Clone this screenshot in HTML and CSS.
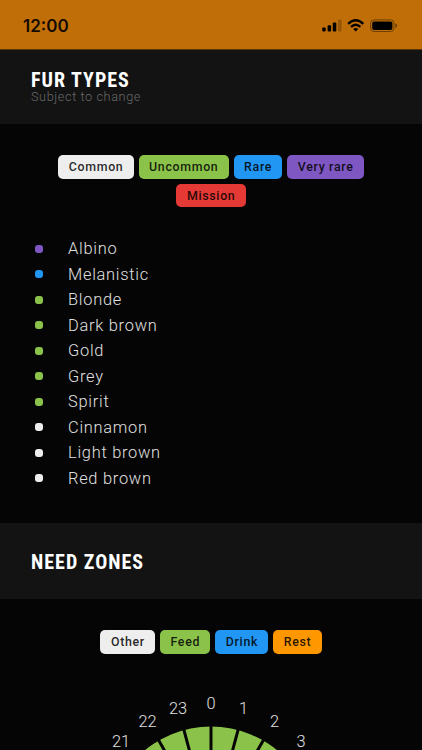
FILE: index.html
```html
<!DOCTYPE html>
<html lang="en">
<head>
    <meta charset="UTF-8">
    <meta name="viewport" content="width=device-width, initial-scale=1.0">
    <title>Fur types</title>
    <link rel="stylesheet" href="styles.css">
</head>
<body>
    <div class="status-bar">
        <span class="time">12:00</span>
        <svg class="status-icons" width="76" height="14" viewBox="0 0 76 14">
            <rect x="0.2" y="8.5" width="3.5" height="4" rx="1"/>
            <rect x="5.6" y="6.2" width="3.5" height="6.3" rx="1"/>
            <rect x="10.8" y="3.4" width="3.5" height="9.1" rx="1"/>
            <rect x="16" y="0.4" width="3.5" height="12.1" rx="1" opacity="0.22"/>
            <g fill="none" stroke="#000" stroke-width="2.3">
                <path d="M26.1 4.8 Q33.7 -2.2 41.3 4.8"/>
                <path d="M29 7.9 Q33.7 3.6 38.4 7.9"/>
            </g>
            <path d="M31.2 9.9 Q33.7 7.9 36.2 9.9 L33.7 12.5 Z"/>
            <rect x="48.6" y="0.9" width="23.4" height="11.6" rx="3.4" fill="none" stroke="#000" stroke-width="1" opacity="0.42"/>
            <rect x="50.2" y="2.5" width="20.2" height="8.4" rx="2"/>
            <path d="M73.3 4.6 Q75 5.2 75 6.7 Q75 8.2 73.3 8.8 Z" opacity="0.5"/>
        </svg>
    </div>

    <div class="section-header first">
        <h2>FUR TYPES</h2>
        <p>Subject to change</p>
    </div>
    <div class="content fur">
        <div class="tags">
            <span class="tag common">Common</span>
            <span class="tag uncommon">Uncommon</span>
            <span class="tag rare">Rare</span>
            <span class="tag very-rare">Very rare</span>
            <span class="tag mission">Mission</span>
        </div>
        <ul class="fur-list">
            <li><i class="dot very-rare"></i>Albino</li>
            <li><i class="dot rare"></i>Melanistic</li>
            <li><i class="dot uncommon"></i>Blonde</li>
            <li><i class="dot uncommon"></i>Dark brown</li>
            <li><i class="dot uncommon"></i>Gold</li>
            <li><i class="dot uncommon"></i>Grey</li>
            <li><i class="dot uncommon"></i>Spirit</li>
            <li><i class="dot common"></i>Cinnamon</li>
            <li><i class="dot common"></i>Light brown</li>
            <li><i class="dot common"></i>Red brown</li>
        </ul>
    </div>

    <div class="section-header second">
        <h2>NEED ZONES</h2>
    </div>
    <div class="content zones">
        <div class="tags">
            <span class="tag common">Other</span>
            <span class="tag uncommon">Feed</span>
            <span class="tag rare">Drink</span>
            <span class="tag rest">Rest</span>
        </div>
        <svg class="clock" width="422" height="97" viewBox="0 0 422 97">
            <circle cx="211" cy="176.5" r="104" fill="#8bc34a"/>
            <g stroke="#050505" stroke-width="3">
                <path d="M211 177V70"/>
                <path d="M211 177L238.7 73.6"/>
                <path d="M211 177L264.5 84.3"/>
                <path d="M211 177L286.7 101.3"/>
                <path d="M211 177L183.3 73.6"/>
                <path d="M211 177L157.5 84.3"/>
                <path d="M211 177L135.3 101.3"/>
            </g>
            <g class="hours">
                <text x="121" y="93">21</text>
                <text x="147.5" y="72.5">22</text>
                <text x="178" y="60">23</text>
                <text x="211" y="55.4">0</text>
                <text x="243.5" y="60">1</text>
                <text x="274.5" y="72.5">2</text>
                <text x="301" y="93">3</text>
            </g>
        </svg>
    </div>
</body>
</html>
```

FILE: styles.css
```css
* {
    margin: 0;
    padding: 0;
    box-sizing: border-box;
}
body {
    height: 750px;
    overflow: hidden;
    background: #050505;
    color: #e0e0e0;
    font-family: Roboto, sans-serif;
}
.status-bar {
    height: 50px;
    padding: 3px 24px 0 23px;
    display: flex;
    align-items: center;
    justify-content: space-between;
    background: #c06f08;
    border-bottom: 1px solid #57340a;
}
.time {
    font-family: Inter, sans-serif;
    font-size: 17px;
    font-weight: 600;
    color: #140a02;
}
.section-header {
    height: 76px;
    padding: 0 31px;
    display: flex;
    flex-direction: column;
    justify-content: center;
    background: #131313;
}
.section-header.first {
    height: 74px;
}
.section-header.second {
    padding-top: 1px;
}
.section-header h2 {
    font-family: "Roboto Condensed", Roboto, sans-serif;
    font-stretch: 75%;
    font-size: 20px;
    line-height: 20px;
    font-weight: 700;
    letter-spacing: 1px;
    color: #fff;
}
.section-header p {
    font-size: 12.7px;
    line-height: 14px;
    font-weight: 300;
    letter-spacing: 0.6px;
    color: #686868;
}
.fur {
    height: 399px;
    padding-top: 31px;
}
.zones {
    padding-top: 31px;
}
.tags {
    padding: 0 50px;
    display: flex;
    flex-wrap: wrap;
    justify-content: center;
    gap: 5px;
}
.tag {
    height: 23.5px;
    padding: 0 10.2px 0 10.5px;
    border-radius: 5px;
    font-size: 12.4px;
    line-height: 24px;
    font-weight: 500;
    letter-spacing: 0.66px;
    color: rgba(0, 0, 0, 0.85);
}
.common {
    background: #eee;
}
.uncommon {
    background: #8bc34a;
}
.rare {
    background: #2196f3;
}
.very-rare {
    background: #7e57c2;
}
.mission {
    background: #e53935;
}
.rest {
    background: #ff9800;
}
.fur-list {
    margin-top: 29px;
    padding-left: 35px;
    list-style: none;
}
.fur-list li {
    height: 25.5px;
    display: flex;
    align-items: center;
    font-size: 16.4px;
    font-weight: 300;
    letter-spacing: 0.74px;
}
.dot {
    width: 8px;
    height: 8px;
    margin-right: 25px;
    border-radius: 3px;
}
.clock {
    display: block;
}
.hours text {
    fill: #e0e0e0;
    font-size: 16.4px;
    font-weight: 300;
    text-anchor: middle;
}
```
